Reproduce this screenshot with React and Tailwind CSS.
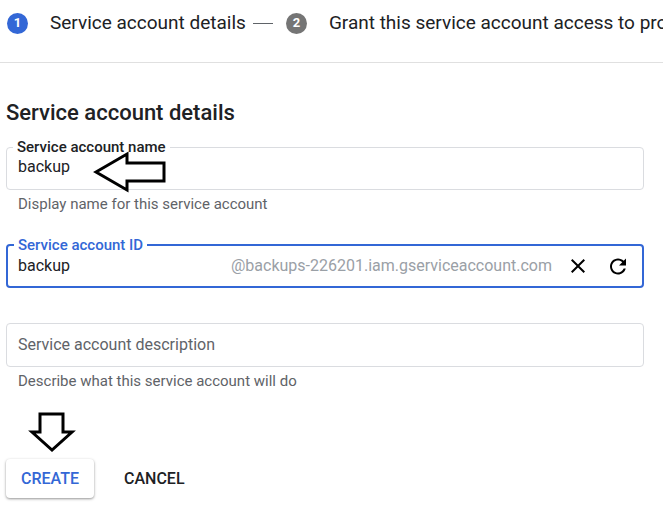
import React from "react";

const font = { fontFamily: "Roboto, 'Noto Sans', Arial, sans-serif" };

function Step({ n, active, children }) {
  return (
    <div className="flex items-center whitespace-nowrap">
      <span
        className={`flex h-[21px] w-[21px] items-center justify-center rounded-full text-[13px] font-bold text-white ${
          active ? "bg-[#3367d6]" : "bg-[#757575]"
        }`}
      >
        {n}
      </span>
      <span className="ml-[22px] text-[19px] leading-6 text-[#202124]">{children}</span>
    </div>
  );
}

function CloseIcon() {
  return (
    <svg width="24" height="24" viewBox="0 0 24 24" fill="#000">
      <path d="M19 6.41L17.59 5 12 10.59 6.41 5 5 6.41 10.59 12 5 17.59 6.41 19 12 13.41 17.59 19 19 17.59 13.41 12z" />
    </svg>
  );
}

function RefreshIcon() {
  return (
    <svg width="27" height="27" viewBox="0 0 24 24" fill="#000">
      <path d="M17.65 6.35C16.2 4.9 14.21 4 12 4c-4.42 0-7.99 3.58-7.99 8s3.57 8 7.99 8c3.73 0 6.84-2.55 7.73-6h-2.08c-.82 2.33-3.04 4-5.65 4-3.31 0-6-2.69-6-6s2.69-6 6-6c1.66 0 3.14.69 4.22 1.78L13 11h7V4l-2.35 2.35z" />
    </svg>
  );
}

export default function App() {
  return (
    <div className="relative h-[507px] w-[663px] overflow-hidden bg-white" style={font}>
      {/* stepper */}
      <div className="flex h-[63px] items-start border-b border-[#e0e0e0] pl-[7px] pt-[11px]">
        <Step n="1" active>
          Service account details
        </Step>
        <span className="ml-[7px] mt-[12px] h-px w-[20px] shrink-0 bg-[#5f6368]" />
        <div className="ml-[13px]">
          <Step n="2">Grant this service account access to project</Step>
        </div>
      </div>

      <div className="pl-[6px] pr-[19px]">
        <h2 className="mt-[36px] text-[22px] font-medium leading-7 text-[#202124]">
          Service account details
        </h2>

        {/* name */}
        <fieldset className="mt-[12px] rounded-[4px] border border-[#dadce0] pb-[10px] pl-[11px] pr-[11px]">
          <legend className="-ml-[5px] px-[4px] text-[15px] font-medium leading-4 text-[#202124]">
            Service account name
          </legend>
          <div className="text-[16px] leading-6 text-[#202124]">backup</div>
        </fieldset>
        <div className="mt-[4px] pl-[12px] text-[15px] leading-5 text-[#5f6368]">
          Display name for this service account
        </div>

        {/* id */}
        <fieldset className="mt-[23px] rounded-[4px] border-2 border-[#3367d6] pb-[7px] pl-[10px] pr-[10px]">
          <legend className="-ml-[4px] px-[4px] text-[15px] font-medium leading-4 text-[#3367d6]">
            Service account ID
          </legend>
          <div className="flex h-[26px] items-center">
            <span className="text-[16px] text-[#202124]">backup</span>
            <span className="ml-auto text-[16px] text-[#9aa0a6]">
              @backups-226201.iam.gserviceaccount.com
            </span>
            <span className="ml-[14px] flex h-6 w-6 items-center justify-center">
              <CloseIcon />
            </span>
            <span className="ml-[16px] flex h-6 w-6 items-center justify-center">
              <RefreshIcon />
            </span>
            <span className="w-[2px]" />
          </div>
        </fieldset>

        {/* description */}
        <div className="mt-[35px] flex h-[44px] items-center rounded-[4px] border border-[#dadce0] px-[11px] text-[16px] text-[#5f6368]">
          Service account description
        </div>
        <div className="mt-[4px] pl-[12px] text-[15px] leading-5 text-[#5f6368]">
          Describe what this service account will do
        </div>

        {/* actions */}
        <div className="mt-[68px] flex items-center">
          <button className="flex h-[39px] w-[88px] items-center justify-center rounded-[4px] bg-white text-[16px] font-medium text-[#3367d6] shadow-[0_1px_3px_rgba(0,0,0,0.3),0_1px_2px_rgba(0,0,0,0.15)]">
            CREATE
          </button>
          <button className="ml-[30px] text-[16px] font-medium text-[#202124]">CANCEL</button>
        </div>
      </div>

      {/* annotation arrows */}
      <svg className="pointer-events-none absolute left-0 top-0" width="663" height="507">
        <polygon
          points="96,172 127,154 127,163 164,163 164,181 127,181 127,190"
          fill="white"
          stroke="black"
          strokeWidth="3"
          strokeLinejoin="miter"
        />
        <polygon
          points="40,414 63,414 63,432 72,432 52,450 32,432 40,432"
          fill="white"
          stroke="black"
          strokeWidth="3"
        />
      </svg>
    </div>
  );
}
